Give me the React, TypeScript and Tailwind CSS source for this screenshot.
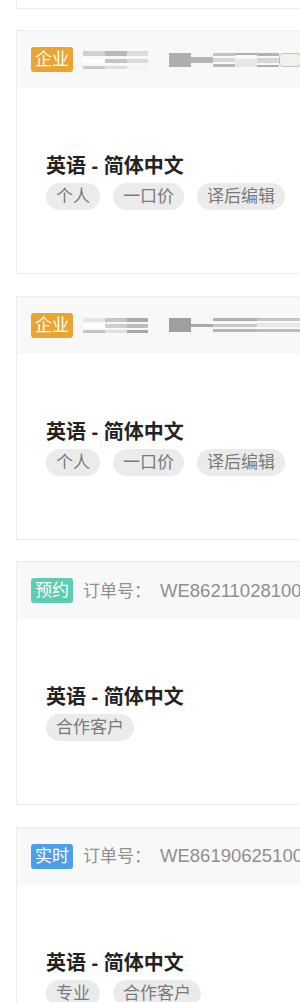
import React from 'react'

type Badge = { label: string; color: string }

interface Order {
  badge: Badge
  orderNo?: string
  tags: string[]
}

const ORANGE = 'bg-[#eba42f]'

const orders: Order[] = [
  { badge: { label: '企业', color: ORANGE }, tags: ['个人', '一口价', '译后编辑'] },
  { badge: { label: '企业', color: ORANGE }, tags: ['个人', '一口价', '译后编辑'] },
  { badge: { label: '预约', color: 'bg-[#5ccdb1]' }, orderNo: 'WE86211028100', tags: ['合作客户'] },
  { badge: { label: '实时', color: 'bg-[#4d9fe9]' }, orderNo: 'WE86190625100', tags: ['专业', '合作客户'] },
]

// pixelated order number (censored in the screenshot)
function Mosaic({ variant }: { variant: number }) {
  if (variant === 0) {
    return (
      <div className="flex items-center gap-[21px]">
        <div className="flex flex-col gap-[3px] w-[65px]">
          <div className="flex h-[5px]"><div className="w-[22px] bg-[#d0d0d0]" /><div className="w-[22px] bg-[#b9b9b9]" /><div className="w-[21px] bg-[#dcdcdc]" /></div>
          <div className="flex h-[4px]"><div className="w-[22px] bg-white" /><div className="w-[22px] bg-[#c4c4c4]" /><div className="w-[21px] bg-[#d8dcdc]" /></div>
          <div className="flex h-[3px]"><div className="w-[22px] bg-[#c9c9c9]" /><div className="w-[22px] bg-[#dedede]" /><div className="w-[21px] bg-[#f2f2f2]" /></div>
        </div>
        <div className="flex items-center h-[16px]">
          <div className="w-[22px] h-[14px] bg-[#acaeaf]" />
          <div className="w-[22px] h-[6px] bg-[#b5b5b5]" />
          <div className="w-[22px] h-[14px] flex flex-col justify-between"><div className="h-[3px] bg-[#bfc4c4]" /><div className="h-[4px] bg-[#d3d8d8]" /><div className="h-[3px] bg-[#b8b8b8]" /></div>
          <div className="w-[22px] h-[14px] flex flex-col justify-between"><div className="h-[2px] bg-[#b0b0b0]" /><div className="h-[8px] bg-[#ece6e4]" /></div>
          <div className="w-[22px] h-[14px] flex flex-col justify-between"><div className="h-[3px] bg-[#b3b3b3]" /><div className="h-[5px] bg-[#d6d6d6]" /><div className="h-[2px] bg-[#b0b0b0]" /></div>
          <div className="w-[22px] h-[14px] rounded-sm bg-[#f4f1ec] border border-[#c0c0c0]" />
        </div>
      </div>
    )
  }
  return (
    <div className="flex items-center gap-[21px]">
      <div className="flex flex-col gap-[2px] w-[65px]">
        <div className="flex h-[4px]"><div className="w-[22px] bg-[#e6e6e6]" /><div className="w-[22px] bg-[#c6c6c6]" /><div className="w-[21px] bg-[#a9a9a9]" /></div>
        <div className="flex h-[4px]"><div className="w-[22px] bg-white" /><div className="w-[22px] bg-[#d0d0d0]" /><div className="w-[21px] bg-[#bcbcbc]" /></div>
        <div className="flex h-[3px]"><div className="w-[22px] bg-[#c4c4c4]" /><div className="w-[22px] bg-[#e0e0e0]" /><div className="w-[21px] bg-[#a8a8a8]" /></div>
      </div>
      <div className="flex items-center h-[16px]">
        <div className="w-[22px] h-[14px] bg-[#9f9f9f]" />
        <div className="w-[22px] h-[3px] bg-[#a9a9a9]" />
        <div className="w-[44px] h-[14px] flex flex-col justify-between"><div className="h-[3px] bg-[#b0b0b0]" /><div className="h-[3px] bg-[#c9c9c9]" /><div className="h-[3px] bg-[#b6b6b6]" /></div>
        <div className="w-[44px] h-[14px] flex flex-col justify-between"><div className="h-[3px] bg-[#c6c6c6]" /><div className="h-[4px] bg-[#e7e7e7]" /><div className="h-[3px] bg-[#bdbdbd]" /></div>
      </div>
    </div>
  )
}

function OrderCard({ order, index }: { order: Order; index: number }) {
  return (
    <div className="w-[320px] h-[244px] shrink-0 border border-[#ececec] bg-white flex flex-col">
      <div className="h-[57px] bg-[#f8f8f8] flex items-center pl-[14px] gap-[10px] whitespace-nowrap overflow-hidden">
        <span className={`${order.badge.color} text-white text-[17px] leading-[25px] px-[4px] rounded-[3px] shrink-0`}>
          {order.badge.label}
        </span>
        {order.orderNo ? (
          <span className="text-[17px] text-[#8f8f8f]">
            订单号：<span className="ml-[9px] text-[18.5px]">{order.orderNo}</span>
          </span>
        ) : (
          <Mosaic variant={index} />
        )}
      </div>
      <div className="pl-[29px] pt-[65px]">
        <div className="text-[20px] font-bold text-[#222] leading-[26px]">英语 - 简体中文</div>
        <div className="flex gap-[13px] mt-[4px]">
          {order.tags.map(t => (
            <span key={t} className="bg-[#ebebeb] text-[#7a7a7a] text-[17px] leading-[27px] px-[10px] rounded-full">
              {t}
            </span>
          ))}
        </div>
      </div>
    </div>
  )
}

export default function App() {
  return (
    <div
      className="w-[300px] h-[1002px] overflow-hidden bg-white"
      style={{ fontFamily: '"Liberation Sans", "Noto Sans CJK SC", sans-serif' }}
    >
      <div className="pl-4 flex flex-col gap-[21.5px]">
        <div className="w-[320px] h-[8.5px] shrink-0 border-l border-b border-[#ececec]" />
        {orders.map((o, i) => (
          <OrderCard key={i} order={o} index={i} />
        ))}
      </div>
    </div>
  )
}
